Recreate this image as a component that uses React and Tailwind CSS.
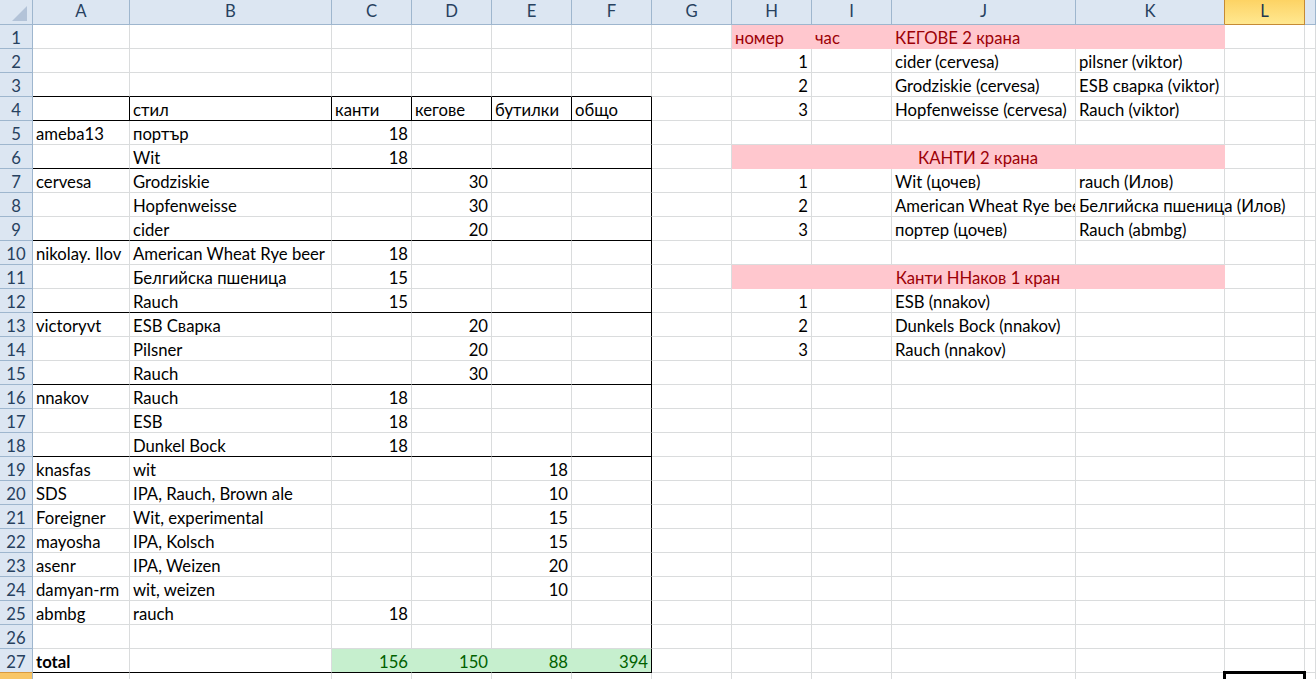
import React from "react";

const COLS = ["A","B","C","D","E","F","G","H","I","J","K","L","M"];

const DATA = {
  1: { H: "номер", I: "час", J: "КЕГОВЕ 2 крана" },
  2: { H: 1, J: "cider (cervesa)", K: "pilsner (viktor)" },
  3: { H: 2, J: "Grodziskie (cervesa)", K: "ESB сварка (viktor)" },
  4: { B: "стил", C: "канти", D: "кегове", E: "бутилки", F: "общо", H: 3, J: "Hopfenweisse (cervesa)", K: "Rauch (viktor)" },
  5: { A: "ameba13", B: "портър", C: 18 },
  6: { B: "Wit", C: 18 },
  7: { A: "cervesa", B: "Grodziskie", D: 30, H: 1, J: "Wit (цочев)", K: "rauch (Илов)" },
  8: { B: "Hopfenweisse", D: 30, H: 2, J: "American Wheat Rye beer", K: "Белгийска пшеница (Илов)" },
  9: { B: "cider", D: 20, H: 3, J: "портер (цочев)", K: "Rauch (abmbg)" },
  10: { A: "nikolay. Ilov", B: "American Wheat Rye beer", C: 18 },
  11: { B: "Белгийска пшеница", C: 15 },
  12: { B: "Rauch", C: 15, H: 1, J: "ESB (nnakov)" },
  13: { A: "victoryvt", B: "ESB Сварка", D: 20, H: 2, J: "Dunkels Bock (nnakov)" },
  14: { B: "Pilsner", D: 20, H: 3, J: "Rauch (nnakov)" },
  15: { B: "Rauch", D: 30 },
  16: { A: "nnakov", B: "Rauch", C: 18 },
  17: { B: "ESB", C: 18 },
  18: { B: "Dunkel Bock", C: 18 },
  19: { A: "knasfas", B: "wit", E: 18 },
  20: { A: "SDS", B: "IPA, Rauch, Brown ale", E: 10 },
  21: { A: "Foreigner", B: "Wit, experimental", E: 15 },
  22: { A: "mayosha", B: "IPA, Kolsch", E: 15 },
  23: { A: "asenr", B: "IPA, Weizen", E: 20 },
  24: { A: "damyan-rm", B: "wit, weizen", E: 10 },
  25: { A: "abmbg", B: "rauch", C: 18 },
  26: {},
  27: { A: "total", C: 156, D: 150, E: 88, F: 394 },
  28: {},
};

const MERGED = { 6: "КАНТИ 2 крана", 11: "Канти ННаков 1 кран" };
const BLACK_BOTTOM = [3, 4, 6, 9, 12, 15, 18, 27];

function cellClass(r, ci) {
  const parts = ["relative flex items-center px-[3px] pt-[3px] whitespace-nowrap border-r border-b leading-[20px]"];
  const isPink = r === 1 && ci >= 7 && ci <= 10;
  const isGreen = r === 27 && ci >= 2 && ci <= 5;
  const blackRight = (ci === 5 && r >= 4 && r <= 27) || (r === 4 && ci <= 5);
  const blackBottom = ci <= 5 && BLACK_BOTTOM.includes(r);

  if (isPink) parts.push("bg-[#ffc7ce] text-[#9c0006]");
  else if (isGreen) parts.push("bg-[#c6efce] text-[#006100]");
  else parts.push("text-black");

  if (blackRight) parts.push("border-r-black");
  else if (isPink) parts.push("border-r-[#ffc7ce]");
  else if (isGreen) parts.push("border-r-[#c6efce]");
  else parts.push("border-r-[#dadcdd]");

  if (blackBottom) parts.push("border-b-black");
  else if (isPink) parts.push("border-b-[#ffc7ce]");
  else parts.push("border-b-[#dadcdd]");

  if (r === 8 && ci === 9) parts.push("overflow-hidden");
  if (r === 27 && ci === 0) parts.push("font-bold");
  return parts.join(" ");
}

function HeaderCell({ children, selected, borderRightOrange }) {
  if (selected) {
    return (
      <div className="flex items-center justify-center border-r border-b border-[#c58a35] bg-linear-to-b from-[#fdd364] to-[#ffe890] text-[#1e3550]">
        {children}
      </div>
    );
  }
  return (
    <div
      className={
        "flex items-center justify-center border-b border-b-[#9eb6ce] border-r bg-[#dce6f2] text-[#27415f] " +
        (borderRightOrange ? "border-r-[#c58a35]" : "border-r-[#9eb6ce]")
      }
    >
      {children}
    </div>
  );
}

function RowHeader({ r }) {
  if (r === 28) {
    return <div className="border-r border-r-[#9eb6ce] bg-[#f8c666] text-[#27415f] flex items-center justify-center pt-[3px] leading-[20px]">28</div>;
  }
  return (
    <div
      className={
        "flex items-center justify-center border-r border-r-[#9eb6ce] border-b bg-[#dce6f2] text-[#27415f] pt-[3px] leading-[20px] " +
        (r === 27 ? "border-b-[#d99a3d]" : "border-b-[#9eb6ce]")
      }
    >
      {r}
    </div>
  );
}

export default function App() {
  const rows = [];
  for (let r = 1; r <= 28; r++) {
    rows.push(<RowHeader key={"h" + r} r={r} />);
    for (let ci = 0; ci < COLS.length; ci++) {
      const col = COLS[ci];
      if (MERGED[r] && ci >= 7 && ci <= 10) {
        if (ci === 7) {
          rows.push(
            <div
              key={r + col}
              className="col-span-4 flex items-center justify-center bg-[#ffc7ce] text-[#9c0006] border-r border-b border-r-[#ffc7ce] border-b-[#ffc7ce] pt-[3px] leading-[20px] whitespace-nowrap"
            >
              {MERGED[r]}
            </div>
          );
        }
        continue;
      }
      const v = DATA[r][col];
      const isNum = typeof v === "number";
      rows.push(
        <div key={r + col} className={cellClass(r, ci) + (isNum ? " justify-end" : " justify-start")}>
          {v !== undefined ? <span>{v}</span> : null}
          {r === 28 && col === "L" ? (
            <div className="absolute left-[-2px] top-[-2px] w-[83px] h-[10px] border-[3px] border-black border-b-0" />
          ) : null}
        </div>
      );
    }
  }

  return (
    <div className="w-[1316px] h-[679px] overflow-hidden bg-white font-['Lato',sans-serif] text-[16.7px]">
      <div className="grid grid-cols-[33px_97px_202px_80px_80px_80px_80px_80px_80px_80px_184px_149px_80px_1fr] grid-rows-[25px_repeat(28,24px)]">
        <div className="relative border-r border-b border-[#9eb6ce] bg-[#dce6f2]">
          <svg className="absolute left-[12px] top-[6px]" width="16" height="16" viewBox="0 0 16 16">
            <polygon points="15,0 15,15 0,15" fill="#b3c3d8" />
          </svg>
        </div>
        {COLS.map((c) => (
          <HeaderCell key={c} selected={c === "L"} borderRightOrange={c === "K"}>
            {c === "M" ? "" : c}
          </HeaderCell>
        ))}
        {rows}
      </div>
    </div>
  );
}
